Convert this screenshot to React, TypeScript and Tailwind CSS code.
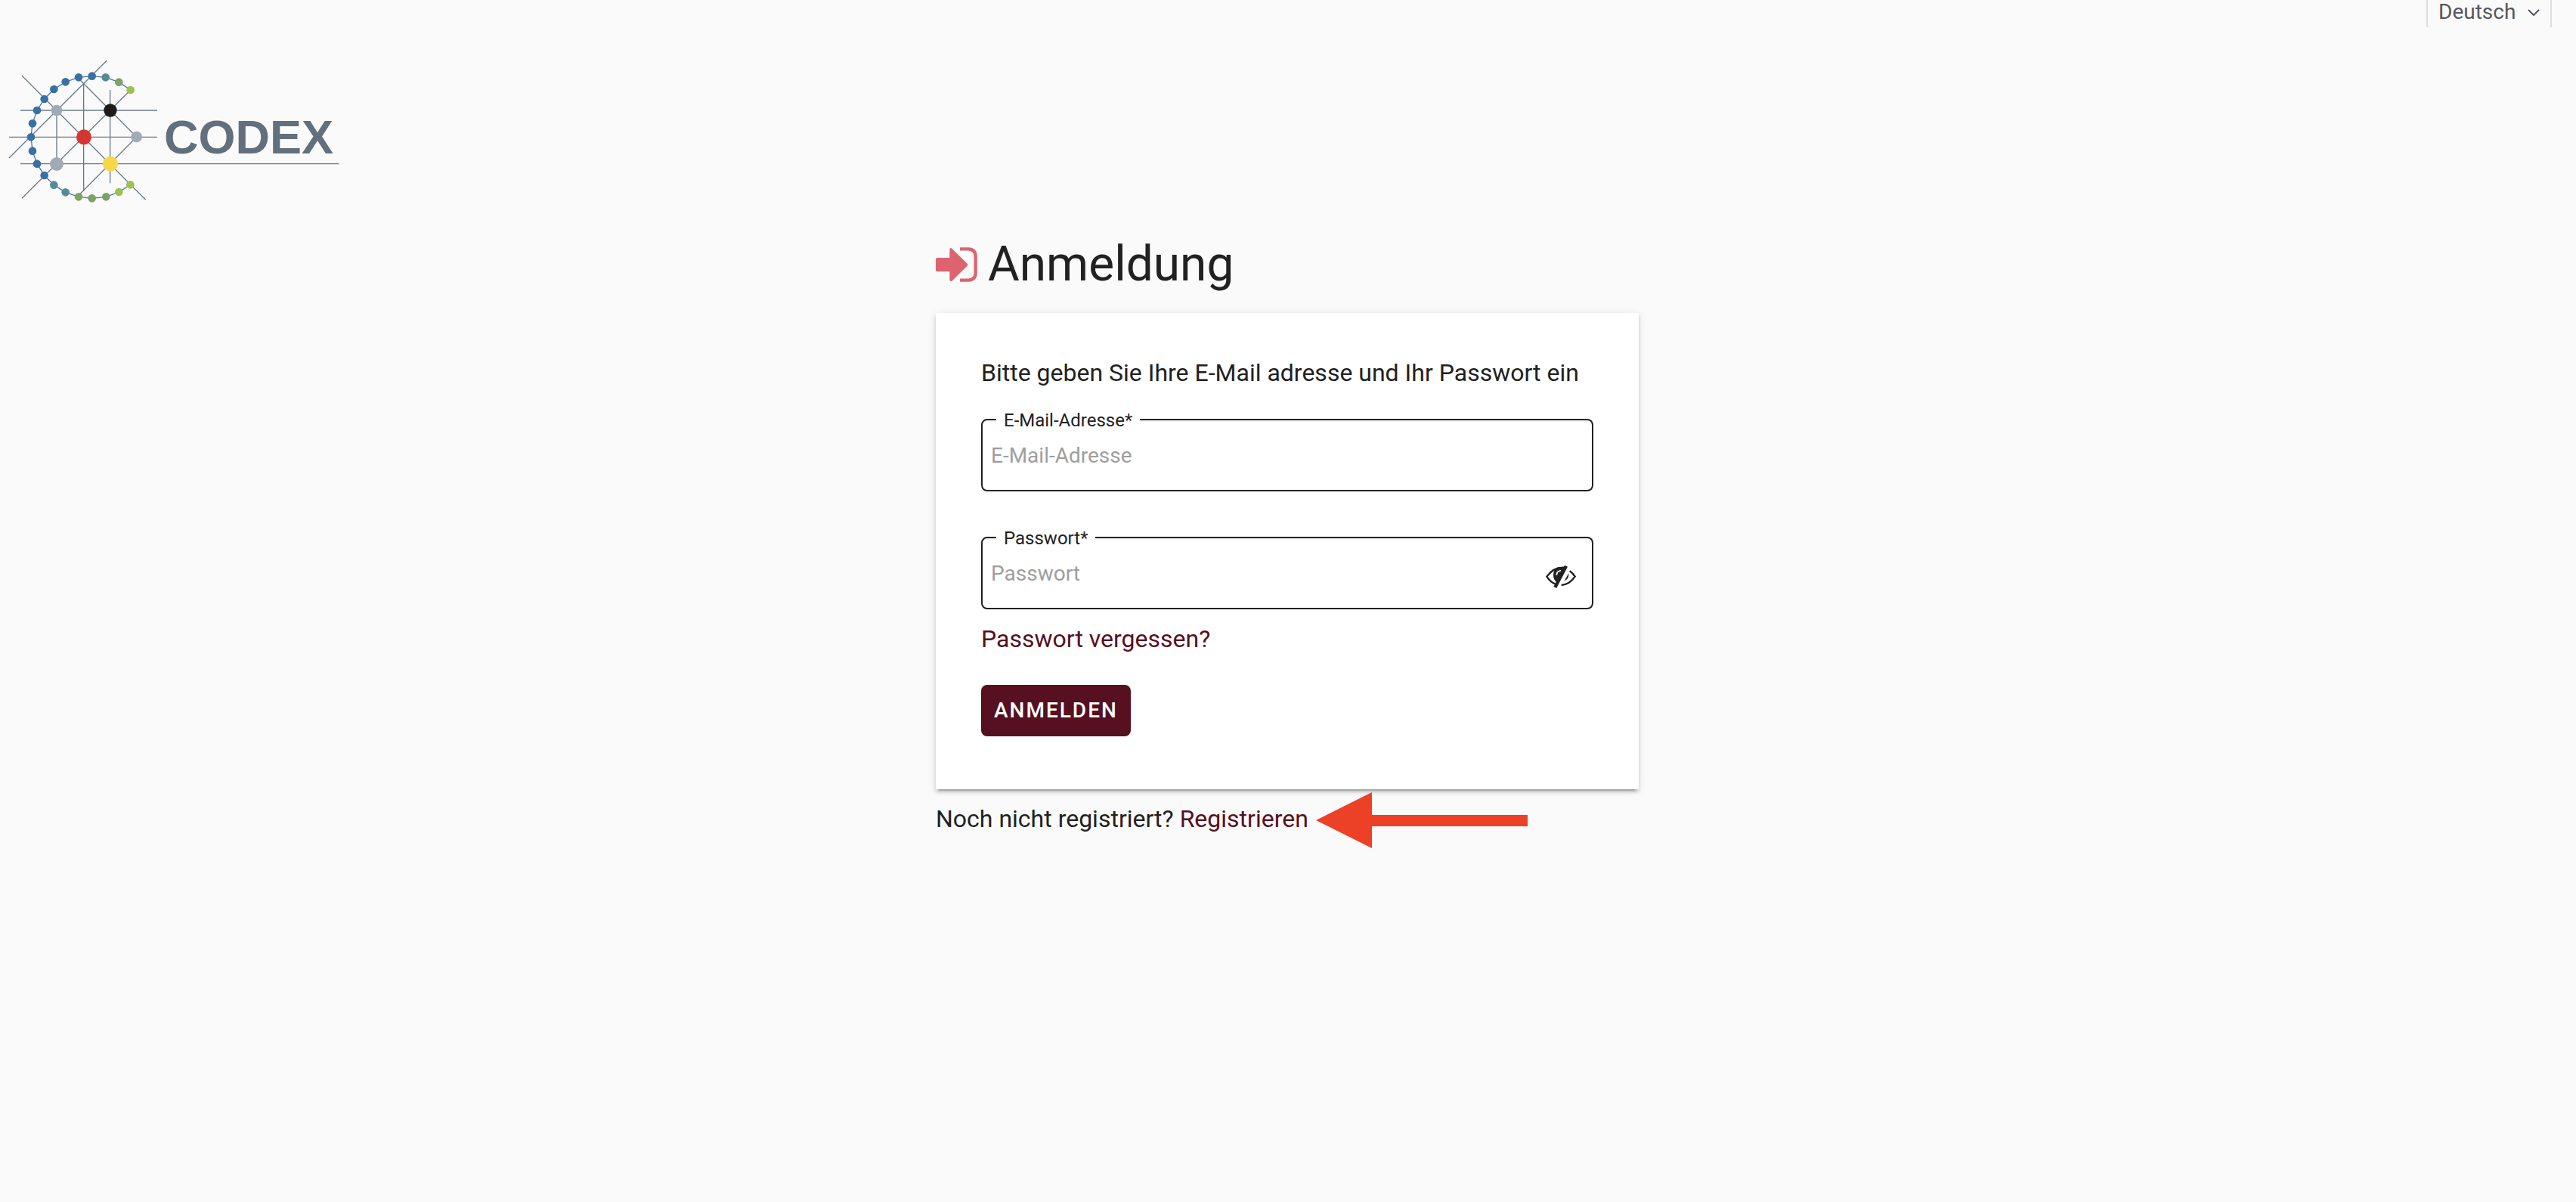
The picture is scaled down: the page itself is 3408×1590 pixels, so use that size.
import { useState } from "react";

const BLUE = "#3a6fa5";
const TEAL = "#588a94";
const GREEN = "#7ba364";
const LIME = "#9cc152";

const ringDots: [number, number, string][] = [
  [518, 147, LIME],
  [472, 116, GREEN],
  [419, 97, TEAL],
  [365, 92, BLUE],
  [312, 97, BLUE],
  [260, 115, BLUE],
  [214, 144, BLUE],
  [176, 183, BLUE],
  [147, 228, BLUE],
  [129, 280, BLUE],
  [123, 334, BLUE],
  [129, 389, BLUE],
  [147, 440, BLUE],
  [176, 486, BLUE],
  [214, 524, TEAL],
  [260, 553, TEAL],
  [312, 571, GREEN],
  [365, 577, GREEN],
  [421, 571, GREEN],
  [472, 552, LIME],
  [517, 523, LIME],
];

const gridLines: [number, number, number, number][] = [
  [81, 228, 624, 228],
  [36, 334, 624, 334],
  [81, 440, 1345, 440],
  [225, 228, 225, 440],
  [332, 121, 332, 549],
  [437, 147, 437, 517],
  [87, 90, 578, 583],
  [424, 30, 36, 417],
  [518, 147, 87, 577],
  [312, 101, 542, 334],
  [542, 334, 312, 565],
];

function CodexLogo() {
  return (
    <svg viewBox="0 0 460 210" className="h-[210px] w-[460px]" role="img" aria-label="CODEX">
      <g transform="scale(0.33333)">
        {gridLines.map(([x1, y1, x2, y2]) => (
          <line key={`${x1}-${y1}-${x2}-${y2}`} x1={x1} y1={y1} x2={x2} y2={y2} stroke="#6b7a87" strokeWidth="4" />
        ))}
        <polyline
          points={ringDots.map(([x, y]) => `${x},${y}`).join(" ")}
          fill="none"
          stroke="#4478ad"
          strokeWidth="4"
        />
        {ringDots.map(([x, y, fill]) => (
          <circle key={`${x}-${y}`} cx={x} cy={y} r="16" fill={fill} />
        ))}
        <circle cx="225" cy="228" r="22" fill="#a0abb5" />
        <circle cx="542" cy="333" r="22" fill="#a0abb5" />
        <circle cx="225" cy="441" r="27" fill="#a0abb5" />
        <circle cx="438" cy="228" r="26" fill="#1d1c1a" />
        <circle cx="333" cy="334" r="30" fill="#d43731" />
        <circle cx="438" cy="440" r="30" fill="#f7d748" />
      </g>
      <text
        x="217"
        y="133"
        fontSize="63"
        fontWeight="700"
        fill="#62707d"
        className="font-['Liberation_Sans',Arial,sans-serif]"
      >
        CODEX
      </text>
    </svg>
  );
}

function SignInIcon() {
  return (
    <svg viewBox="0 0 165 138" className="h-[46px] w-[55px] text-[#dc6370]" aria-hidden="true">
      <path
        fill="currentColor"
        d="M6 42H55V10Q56 0 64 5L125 65Q129 70 125 74L64 134Q56 138 55 128V97H6Q0 97 0 91V48Q0 42 6 42Z"
      />
      <path
        fill="none"
        stroke="currentColor"
        strokeWidth="13"
        d="M96 7H130Q158 9 158 36V103Q158 129 130 131H96"
      />
    </svg>
  );
}

function EyeOffIcon() {
  return (
    <svg viewBox="0 0 120 90" className="h-[30px] w-10 text-[#212121]" aria-hidden="true" fill="none">
      <path stroke="currentColor" strokeWidth="7" d="M78 9C46 5 22 20 4 44C14 60 26 69 40 75" />
      <path fill="currentColor" d="M38 12C26 32 28 54 44 68L80 8C62 5 48 6 38 12Z" />
      <path stroke="currentColor" strokeWidth="13" d="M81 2L37 87" />
      <path stroke="#ffffff" strokeWidth="5" d="M43 39C43 28 49 22 60 20" />
      <path stroke="currentColor" strokeWidth="7" d="M95 22C104 28 111 36 116 44C104 62 85 76 62 78" />
      <path fill="currentColor" d="M91 31C92 46 86 56 73 63Z" />
    </svg>
  );
}

const fieldBox =
  "block h-24 w-full rounded-lg border-2 border-[#212121] bg-white pl-[11px] text-[28px] text-[#212121] shadow-[inset_0_2px_2px_rgba(0,0,0,0.06)] outline-none placeholder:text-[#9e9e9e] placeholder:opacity-100";
const fieldLabel = "absolute -top-3 left-5 bg-white px-2.5 text-[24px] leading-7 text-[#212121]";
const link = "text-[#56101f] hover:underline";

export default function App() {
  const [visible, setVisible] = useState(false);

  return (
    <div className="min-h-screen bg-[#fafafa] font-[Roboto,sans-serif] text-[32px] leading-[38px] text-[#212121]">
      <header>
        <div className="flex h-9 justify-end pr-8">
          <div className="relative h-full border-x-2 border-[#dcdddf]">
            <select
              aria-label="Sprache"
              className="block h-8 w-[162px] appearance-none bg-transparent pl-3.5 text-[28px] leading-8 text-[#54585d] outline-none"
            >
              <option>Deutsch</option>
            </select>
            <svg
              viewBox="0 0 16 10"
              className="pointer-events-none absolute top-3 right-3.5 h-2.5 w-4"
              fill="none"
              stroke="#54585d"
              strokeWidth="2"
              aria-hidden="true"
            >
              <path d="M1 1L8 8L15 1" />
            </svg>
          </div>
        </div>
        <a href="#" className="mt-[34px] block w-fit">
          <CodexLogo />
        </a>
      </header>

      <main className="mx-auto mt-[38px] w-full max-w-[932px] pr-0.5">
        <h1 className="flex items-center gap-3.5 text-[64px] leading-none">
          <SignInIcon />
          Anmeldung
        </h1>

        <form
          onSubmit={(e) => e.preventDefault()}
          className="mt-8 bg-white px-[60px] pt-[60px] pb-[70px] shadow-[0_6px_2px_-4px_rgba(0,0,0,0.2),0_4px_4px_0_rgba(0,0,0,0.14),0_2px_10px_0_rgba(0,0,0,0.12)]"
        >
          <p>Bitte geben Sie Ihre E-Mail adresse und Ihr Passwort ein</p>

          <div className="relative mt-[42px]">
            <input id="email" type="email" placeholder="E-Mail-Adresse" className={fieldBox} />
            <label htmlFor="email" className={fieldLabel}>
              E-Mail-Adresse*
            </label>
          </div>

          <div className="relative mt-[60px]">
            <input
              id="password"
              type={visible ? "text" : "password"}
              placeholder="Passwort"
              className={fieldBox}
            />
            <label htmlFor="password" className={fieldLabel}>
              Passwort*
            </label>
            <button
              type="button"
              aria-label="Passwort anzeigen"
              onClick={() => setVisible(!visible)}
              className="absolute top-[38px] right-[23px]"
            >
              <EyeOffIcon />
            </button>
          </div>

          <p className="mt-5">
            <a href="#" className={link}>
              Passwort vergessen?
            </a>
          </p>

          <button
            type="submit"
            className="mt-[42px] block h-[68px] rounded-lg bg-[#56101f] px-[17px] text-[28px] leading-8 font-medium tracking-[2px] text-white uppercase"
          >
            Anmelden
          </button>
        </form>

        <div className="mt-1 flex items-start">
          <p className="mt-4">
            Noch nicht registriert?{" "}
            <a href="#" className={link}>
              Registrieren
            </a>
          </p>
          <svg viewBox="0 0 280 74" className="ml-2.5 h-[74px] w-[280px]" fill="#ec4127" aria-hidden="true">
            <path d="M0 37L74 0V30H280V45H74V74Z" />
          </svg>
        </div>
      </main>
    </div>
  );
}
